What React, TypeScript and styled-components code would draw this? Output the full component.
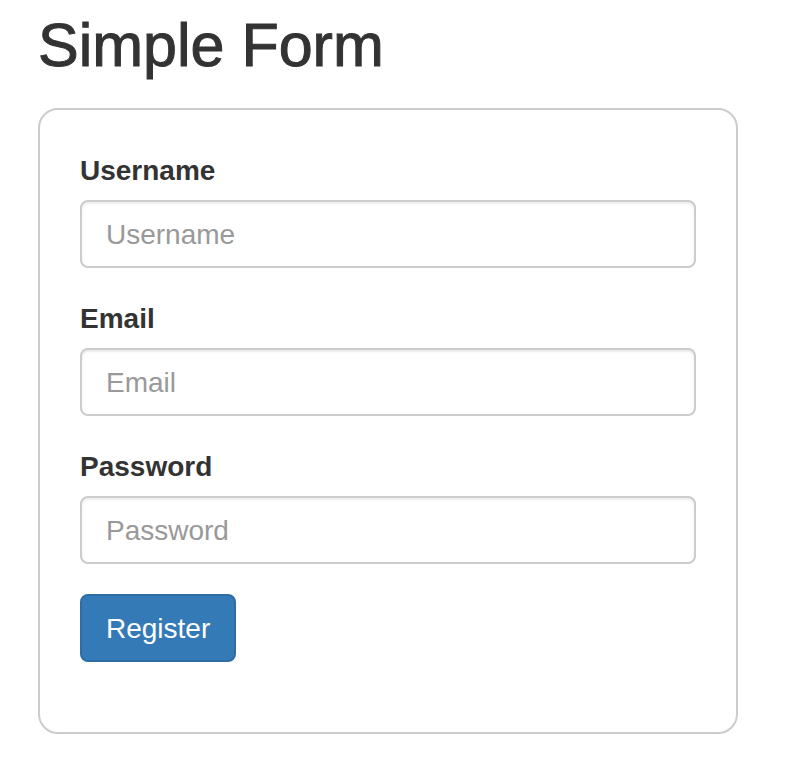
import React from "react";
import styled, { createGlobalStyle } from "styled-components";

const GlobalStyle = createGlobalStyle`
  html, body {
    margin: 0;
    padding: 0;
    background: #ffffff;
  }
  body {
    font-family: "Liberation Sans", Arial, Helvetica, sans-serif;
    color: #333333;
  }
  * { box-sizing: border-box; }
`;

const Page = styled.div`
  padding: 12px 0 0 38px;
`;

const Title = styled.h1`
  margin: 0 0 30px 0;
  font-size: 61px;
  line-height: 66px;
  font-weight: 400;
  -webkit-text-stroke: 1px #333333;
  color: #333333;
`;

const Card = styled.form`
  width: 700px;
  border: 2px solid #cccccc;
  border-radius: 20px;
  padding: 40px;
  display: flex;
  flex-direction: column;
`;

const Group = styled.div`
  display: flex;
  flex-direction: column;
  align-items: flex-start;
  margin-bottom: 30px;
`;

const Label = styled.label`
  font-size: 28px;
  line-height: 42px;
  font-weight: 700;
  color: #333333;
  margin-bottom: 8px;
`;

const Input = styled.input`
  width: 100%;
  height: 68px;
  padding: 13px 24px 11px 24px;
  font-family: inherit;
  font-size: 28px;
  color: #555555;
  background: #ffffff;
  border: 2px solid #cccccc;
  border-radius: 8px;
  box-shadow: inset 0 2px 2px rgba(0, 0, 0, 0.075);
  outline: none;
  &::placeholder {
    color: #999999;
  }
`;

const Button = styled.button`
  height: 68px;
  padding: 12px 24px;
  font-family: inherit;
  font-size: 28px;
  line-height: 42px;
  color: #ffffff;
  background: #337ab7;
  border: 2px solid #2e6da4;
  border-radius: 8px;
  cursor: pointer;
`;

const fields = [
  { id: "username", label: "Username", type: "text" },
  { id: "email", label: "Email", type: "email" },
  { id: "password", label: "Password", type: "password" },
];

export default function App() {
  return (
    <>
      <GlobalStyle />
      <Page>
        <Title>Simple Form</Title>
        <Card onSubmit={(e) => e.preventDefault()}>
          {fields.map((f) => (
            <Group key={f.id}>
              <Label htmlFor={f.id}>{f.label}</Label>
              <Input id={f.id} type={f.type} placeholder={f.label} />
            </Group>
          ))}
          <Group>
            <Button type="submit">Register</Button>
          </Group>
        </Card>
      </Page>
    </>
  );
}
